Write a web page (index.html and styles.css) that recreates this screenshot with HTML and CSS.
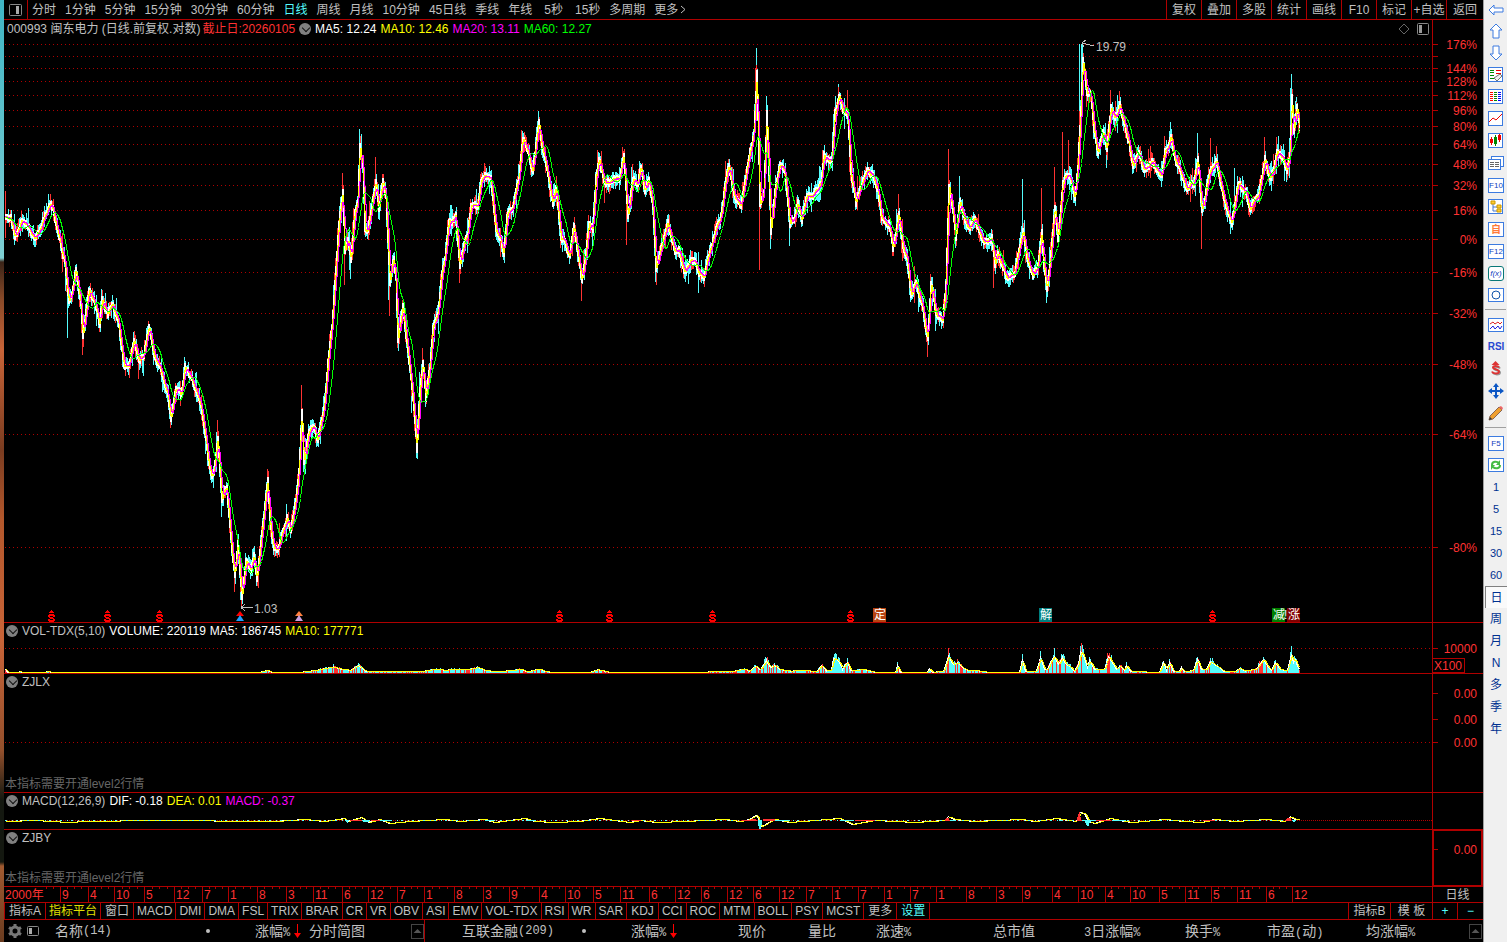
FILE: index.html
```html
<!DOCTYPE html>
<html lang="zh-CN">

    <head>
        <meta charset="UTF-8">
        <meta name="viewport" content="width=device-width, initial-scale=1.0">
        <title>闽东电力 000993</title>
        <link rel="stylesheet" href="styles.css">
    </head>

    <body>
        <div class="wallpaper"></div>

        <main class="app">
            <nav class="topbar">
                <button class="topbar__layout" aria-label="布局">
                    <svg width="13" height="12" viewBox="0 0 13 12"><rect x=".5" y=".5" width="12" height="11" rx="1" fill="none" stroke="#888"/><rect x="7" y="2" width="3" height="8" fill="#aaa"/></svg>
                </button>
                <div class="periods">
                    <button>分时</button>
                    <button>1分钟</button>
                    <button>5分钟</button>
                    <button>15分钟</button>
                    <button>30分钟</button>
                    <button>60分钟</button>
                    <button class="active">日线</button>
                    <button>周线</button>
                    <button>月线</button>
                    <button>10分钟</button>
                    <button>45日线</button>
                    <button>季线</button>
                    <button>年线</button>
                    <button class="wide">5秒</button>
                    <button>15秒</button>
                    <button>多周期</button>
                    <button>更多<svg width="8" height="9" viewBox="0 0 8 9"><path d="M3 1l4 3.500-4 3.500" fill="none" stroke="#c0c0c0"/></svg></button>
                </div>
                <div class="tools">
                    <button>复权</button>
                    <button>叠加</button>
                    <button>多股</button>
                    <button>统计</button>
                    <button>画线</button>
                    <button>F10</button>
                    <button>标记</button>
                    <button>+自选</button>
                    <button>返回</button>
                </div>
            </nav>

            <section class="panel panel--main">
                <svg class="plot" id="kline"></svg>
                <header class="legend">
                    <span>000993 闽东电力 (日线.前复权.对数)</span>
                    <span class="red">截止日:20260105</span>
                    <button class="fold" aria-label="指标菜单"></button>
                    <span class="white">MA5: 12.24</span>
                    <span class="yellow">MA10: 12.46</span>
                    <span class="magenta">MA20: 13.11</span>
                    <span class="green">MA60: 12.27</span>
                    <span class="legend__icons">
                        <svg width="12" height="12" viewBox="0 0 12 12"><path d="M6 1l5 5-5 5-5-5z" fill="none" stroke="#666"/></svg>
                        <svg width="12" height="12" viewBox="0 0 12 12"><rect x=".5" y=".5" width="11" height="11" rx="1" fill="none" stroke="#888"/><rect x="2" y="2" width="3" height="8" fill="#999"/></svg>
                    </span>
                </header>
            </section>

            <section class="panel panel--vol">
                <svg class="plot" id="vol"></svg>
                <header class="legend">
                    <button class="fold" aria-label="指标菜单"></button>
                    <span>VOL-TDX(5,10)</span>
                    <span class="white">VOLUME: 220119</span>
                    <span class="white">MA5: 186745</span>
                    <span class="yellow">MA10: 177771</span>
                </header>
            </section>

            <section class="panel panel--zjlx">
                <svg class="plot" id="zjlx"></svg>
                <header class="legend">
                    <button class="fold" aria-label="指标菜单"></button>
                    <span>ZJLX</span>
                </header>
                <p class="notice">本指标需要开通level2行情</p>
            </section>

            <section class="panel panel--macd">
                <svg class="plot" id="macd"></svg>
                <header class="legend">
                    <button class="fold" aria-label="指标菜单"></button>
                    <span>MACD(12,26,9)</span>
                    <span class="white">DIF: -0.18</span>
                    <span class="yellow">DEA: 0.01</span>
                    <span class="magenta">MACD: -0.37</span>
                </header>
            </section>

            <section class="panel panel--zjby">
                <svg class="plot" id="zjby"></svg>
                <header class="legend">
                    <button class="fold" aria-label="指标菜单"></button>
                    <span>ZJBY</span>
                </header>
                <p class="notice">本指标需要开通level2行情</p>
            </section>

            <section class="panel panel--time">
                <svg class="plot" id="time"></svg>
                <span class="time__period">日线</span>
            </section>

            <nav class="tabs">
                <button class="cjk">指标A</button>
                <button class="gold">指标平台</button>
                <button class="cjk">窗口</button>
                <button>MACD</button>
                <button>DMI</button>
                <button>DMA</button>
                <button>FSL</button>
                <button>TRIX</button>
                <button>BRAR</button>
                <button>CR</button>
                <button>VR</button>
                <button>OBV</button>
                <button>ASI</button>
                <button>EMV</button>
                <button>VOL-TDX</button>
                <button>RSI</button>
                <button>WR</button>
                <button>SAR</button>
                <button class="cjk">KDJ</button>
                <button>CCI</button>
                <button>ROC</button>
                <button>MTM</button>
                <button>BOLL</button>
                <button>PSY</button>
                <button>MCST</button>
                <button class="cjk">更多</button>
                <button class="cjk cyan">设置</button>
                <div class="tabs__right">
                    <button>指标B</button>
                    <button>模 板</button>
                    <button class="zoom">+</button>
                    <button class="zoom">−</button>
                </div>
            </nav>

            <footer class="lists">
                <div class="list list--left">
                    <span class="list__icons">
                        <svg width="16" height="16" viewBox="0 0 16 16"><circle cx="8" cy="8" r="4" fill="none" stroke="#777" stroke-width="3"/><path d="M8 1v3M8 12v3M2 4.500l2.500 1.500M11.500 10l2.500 1.500M2 11.500L4.500 10M11.500 6L14 4.500" stroke="#777" stroke-width="3"/></svg>
                        <svg width="12" height="12" viewBox="0 0 12 12"><rect x=".5" y="1.500" width="11" height="9" rx="1" fill="none" stroke="#888"/><rect x="2" y="3" width="3" height="6" fill="#aaa"/></svg>
                    </span>
                    <span class="name">名称<i>(14)</i><b class="dot"></b></span>
                    <span>涨幅<i>%</i><svg class="down" width="7" height="14" viewBox="0 0 7 14"><path d="M3 0h1v9h3l-3.500 5L0 9h3z" fill="#f00"/></svg></span>
                    <span>分时简图</span>
                    <button class="scroll" aria-label="向上"><svg width="11" height="13" viewBox="0 0 11 13"><path d="M5.500 4l4 4h-8z" fill="#555"/></svg></button>
                </div>
                <div class="list list--right">
                    <span class="name">互联金融<i>(209)</i><b class="dot"></b></span>
                    <span>涨幅<i>%</i><svg class="down" width="7" height="14" viewBox="0 0 7 14"><path d="M3 0h1v9h3l-3.500 5L0 9h3z" fill="#f00"/></svg></span>
                    <span>现价</span>
                    <span>量比</span>
                    <span>涨速<i>%</i></span>
                    <span>总市值</span>
                    <span><i>3</i>日涨幅<i>%</i></span>
                    <span>换手<i>%</i></span>
                    <span>市盈<i>(</i>动<i>)</i></span>
                    <span>均涨幅<i>%</i></span>
                    <button class="scroll" aria-label="向上"><svg width="11" height="13" viewBox="0 0 11 13"><path d="M5.500 4l4 4h-8z" fill="#555"/></svg></button>
                </div>
            </footer>
        </main>

        <aside class="sidebar">
            <button class="first" aria-label="后退"><svg viewBox="0 0 16 16"><path d="M1 8l5-5v3h9v4H6v3z" fill="#fff" stroke="#3c7be0"/></svg></button>
            <button aria-label="上移"><svg viewBox="0 0 16 16"><path d="M8 1l6 6h-3v8H5V7H2z" fill="#fff" stroke="#3c7be0"/></svg></button>
            <button aria-label="下移"><svg viewBox="0 0 16 16"><path d="M8 15l6-6h-3V1H5v8H2z" fill="#fff" stroke="#3c7be0"/></svg></button>
            <button aria-label="报价"><svg viewBox="0 0 16 16"><rect class="box" x=".5" y=".5" width="14" height="14"/><path d="M2 3.500h4M2 5.500h4M2 8.500h4M2 11.500h4" stroke="#080"/><path d="M8 3.500h5M8 6.500h5" stroke="#e00"/><path d="M6 11l3 3 5-5-2-2z" fill="#eee" stroke="#777"/></svg></button>
            <button aria-label="列表"><svg viewBox="0 0 16 16"><rect class="box" x=".5" y=".5" width="14" height="14"/><path d="M2 3.500h3M2 5.500h3M2 7.500h3M2 9.500h3M2 11.500h3" stroke="#f00"/><path d="M6 3.500h3M6 5.500h3M6 7.500h3M6 9.500h3M6 11.500h3" stroke="#080"/><path d="M10 3.500h3M10 5.500h3M10 7.500h3M10 9.500h3M10 11.500h3" stroke="#00f"/></svg></button>
            <button aria-label="走势"><svg viewBox="0 0 16 16"><rect class="box" x=".5" y=".5" width="14" height="14"/><path d="M1 11l4-4 3 2 6-6" fill="none" stroke="#e00"/></svg></button>
            <button aria-label="K线"><svg viewBox="0 0 16 16"><rect class="box" x=".5" y=".5" width="14" height="14"/><path d="M3.500 4v8M11.500 1v8" stroke="#e00"/><path d="M7.500 2v11" stroke="#080"/><path d="M2 6h3v4H2zM10 2h3v5h-3z" fill="#e00"/><path d="M6 4h3v7H6z" fill="#080"/></svg></button>
            <button aria-label="窗口"><svg viewBox="0 0 16 16"><rect class="box" x="3.500" y="1.500" width="12" height="10"/><rect class="box" x=".5" y="4.500" width="12" height="10"/><path d="M2 7.500h4M7 7.500h4M2 9.500h4M7 9.500h4M2 11.500h4M7 11.500h4" stroke="#666"/></svg></button>
            <button class="key"><span>F10</span></button>
            <button aria-label="结构"><svg viewBox="0 0 16 16"><rect class="box" x=".5" y=".5" width="14" height="14"/><path d="M5 5v7h4M5 8h4" fill="none" stroke="#47c"/><path d="M3 2h4v3H3zM9 6h4v3H9zM9 10h4v3H9z" fill="#fc3" stroke="#c90"/></svg></button>
            <button class="key key--orange"><span>自</span></button>
            <button class="key"><span>F12</span></button>
            <button class="key key--fx"><span>f(x)</span></button>
            <button aria-label="圆"><svg viewBox="0 0 16 16"><rect class="box" x=".5" y="1.500" width="15" height="13"/><circle cx="8" cy="8" r="4" fill="none" stroke="#15a"/></svg></button>
            <hr>
            <button aria-label="叠加"><svg viewBox="0 0 16 16"><rect class="box" x=".5" y="1.500" width="15" height="13"/><path d="M2 7l3-2 2 2 3-2 2 2 2-2" fill="none" stroke="#d22"/><path d="M2 12l3-3 2 3 3-3 2 3 2-3" fill="none" stroke="#22d"/></svg></button>
            <button class="rsi">RSI</button>
            <button aria-label="信号"><svg viewBox="0 0 16 16"><path d="M7.500 0l4 4h-8z" fill="#d33"/><path d="M12 7.500c-1-2-6-2-6 0s6 1.500 6 4-6 2.500-7 0" fill="none" stroke="#999" stroke-width="2"/><path d="M11 6.500c-1-2-6-2-6 0s6 1.500 6 4-6 2.500-7 0" fill="none" stroke="#d33" stroke-width="2"/></svg></button>
            <button aria-label="移动"><svg viewBox="0 0 16 16"><path d="M8 0l3 4H9v3h3V5l4 3-4 3V9H9v3h2l-3 4-3-4h2V9H4v2L0 8l4-3v2h3V4H5z" fill="#0b56c4"/></svg></button>
            <button aria-label="画笔"><svg viewBox="0 0 16 16"><path d="M1 15l1-4 9-9 3 3-9 9z" fill="#f0a030" stroke="#865"/><path d="M11 2l2-1 2 2-1 2z" fill="#e66"/><path d="M1 15l1-3 2 2z" fill="#333"/></svg></button>
            <hr>
            <button class="key"><span>F5</span></button>
            <button aria-label="刷新"><svg viewBox="0 0 16 16"><rect class="box" x=".5" y="1.500" width="15" height="13"/><path d="M4 8c0-4 5-4 7-2M12 8c0 4-5 4-7 2" fill="none" stroke="#4b4" stroke-width="2"/><path d="M12 3v5H8zM3 13V8h4z" fill="#4b4"/></svg></button>
            <button class="num">1</button>
            <button class="num">5</button>
            <button class="num">15</button>
            <button class="num">30</button>
            <button class="num">60</button>
            <button class="num on">日</button>
            <button class="num">周</button>
            <button class="num">月</button>
            <button class="num">N</button>
            <button class="num">多</button>
            <button class="num">季</button>
            <button class="num">年</button>
        </aside>

        <script src="chart.js"></script>
    </body>

</html>
```
FILE: styles.css
```css
* {
    margin: 0;
    padding: 0;
    box-sizing: border-box;
}

body {
    display: flex;
    height: 100vh;
    background: #000;
    color: #c0c0c0;
    font: 12px/16px "Liberation Sans", "Noto Sans CJK SC", sans-serif;
    overflow: hidden;
}

button {
    border: 0;
    background: none;
    color: inherit;
    font: inherit;
    white-space: nowrap;
    cursor: pointer;
}

.white { color: #fff; }
.yellow { color: #ff0; }
.magenta { color: #f0f; }
.green { color: #0f0; }
.red { color: #ff3232; }

.wallpaper {
    width: 4px;
    background: linear-gradient(#3fb5c4 0, #7fd0d4 258px, #3a2418 262px, #8a4a28 300px, #c86438 350px, #7a3c20 450px, #b4582c 520px, #c86438 640px, #94502c 750px, #141810 800px, #141810 862px, #a05a30 866px, #6a3c20 100%);
}

.app {
    flex: 1;
    min-width: 0;
    display: flex;
    flex-direction: column;
}

/* top bar */
.topbar {
    display: flex;
    height: 20px;
    border-bottom: 1px solid #b00000;
}

.topbar__layout {
    width: 24px;
    border-right: 1px solid #b00000;
    line-height: 0;
}

.periods {
    display: flex;
    gap: 9px;
    padding-left: 4px;
    flex: 1;
    line-height: 18px;
}

.periods .active {
    color: #54fcfc;
}

.periods .wide {
    padding: 0 3px;
}

.tools {
    display: flex;
}

.tools button {
    width: 35px;
    border-left: 1px solid #b00000;
    line-height: 18px;
}

.tools button:last-child {
    width: 37px;
}

/* chart panels */
.panel {
    position: relative;
    border-bottom: 1px solid #b00000;
}

.panel--main { flex: 1; min-height: 0; }
.panel--vol { height: 51px; }
.panel--zjlx { height: 119px; }
.panel--macd { height: 37px; }
.panel--zjby { height: 57px; }
.panel--time { height: 16px; }

.plot {
    position: absolute;
    left: 0;
    top: 0;
    width: 100%;
    height: 100%;
}

.plot text {
    font: 12px "Liberation Sans", "Noto Sans CJK SC", sans-serif;
}

.legend {
    position: relative;
    display: flex;
    align-items: center;
    gap: 4px;
    padding-left: 2px;
    height: 15px;
}

.panel--main .legend {
    height: 18px;
    padding-left: 3px;
}

.panel--main .legend .red {
    margin-left: -2px;
}

.legend__icons {
    display: flex;
    gap: 7px;
    margin-left: auto;
    padding-right: 54px;
}

.fold {
    position: relative;
    width: 12px;
    height: 12px;
    border-radius: 6px;
    background: #808080;
}

.fold::after {
    content: "";
    position: absolute;
    left: 4px;
    top: 2px;
    width: 5px;
    height: 5px;
    border: solid #111;
    border-width: 0 1px 1px 0;
    transform: rotate(45deg);
}

.notice {
    position: absolute;
    left: 1px;
    bottom: 0;
    color: #666;
}

.time__period {
    position: absolute;
    right: 0;
    width: 51px;
    text-align: center;
}

/* indicator tabs */
.tabs {
    display: flex;
    height: 17px;
    border-bottom: 1px solid #b00000;
    border-left: 1px solid #b00000;
}

.tabs button {
    padding: 0 3px;
    border-right: 1px solid #b00000;
    line-height: 16px;
}

.tabs .cjk { padding: 0 4px; }
.tabs .gold { color: #e0e000; }
.tabs .cyan { color: #54fcfc; }

.tabs__right {
    display: flex;
    margin-left: auto;
    border-left: 1px solid #b00000;
}

.tabs__right button {
    width: 42px;
}

.tabs__right .zoom {
    width: 25px;
    color: #54fcfc;
}

.tabs__right .zoom:last-child {
    border-right: 0;
}

/* quote list headings */
.lists {
    display: flex;
    height: 22px;
    font-size: 14px;
    line-height: 20px;
    white-space: nowrap;
}

.lists i {
    font: 12px "Liberation Mono", monospace;
}

.list {
    display: grid;
    align-items: center;
}

.list--left {
    width: 421px;
    grid-template-columns: 51px 1fr 54px 102px 13px;
    border-right: 1px solid #b00000;
}

.list--right {
    flex: 1;
    padding-left: 37px;
    grid-template-columns: 169fr 107fr 70fr 68fr 117fr 91fr 101fr 82fr 99fr 103fr 14px;
}

.list__icons {
    display: flex;
    align-items: center;
    gap: 4px;
    padding-left: 3px;
}

.name {
    display: flex;
    align-items: center;
}

.dot {
    width: 4px;
    height: 4px;
    margin: 0 45px 0 auto;
    border-radius: 2px;
    background: #c0c0c0;
}

.down {
    margin-left: 4px;
    vertical-align: -2px;
}

.scroll {
    width: 13px;
    height: 15px;
    border: 1px solid #444;
    line-height: 0;
}

/* right icon bar */
.sidebar {
    width: 24px;
    padding-left: 1px;
    background: #f0f0f0;
    border-left: 1px solid #a0a0a0;
    display: flex;
    flex-direction: column;
    color: #003090;
}

.sidebar button {
    flex: none;
    height: 22px;
    display: flex;
    align-items: center;
    justify-content: center;
}

.sidebar .first {
    height: 20px;
}

.sidebar svg {
    width: 16px;
    height: 16px;
}

.sidebar .box {
    fill: #fff;
    stroke: #3c7be0;
}

.sidebar hr {
    margin: 3px 1px 4px 0;
    border: 0;
    height: 1px;
    background: #a0a0a0;
}

.key span {
    width: 16px;
    height: 15px;
    border: 1px solid #3c7be0;
    background: #fff;
    color: #1040c0;
    font-size: 8px;
    line-height: 13px;
}

.key--orange span {
    color: #ff7a38;
    font-size: 10px;
    font-weight: bold;
}

.key--fx span {
    border-color: #087878;
    border-radius: 3px;
    font-style: italic;
}

.sidebar .rsi {
    font-weight: bold;
    font-size: 10px;
    color: #2848d0;
}

.sidebar .num {
    font-size: 11px;
}

.sidebar .num:nth-last-child(-n+7) {
    font-size: 12px;
}

.sidebar .on {
    background: #fafafa;
    border-left: 1px solid #808080;
    border-top: 1px solid #808080;
}
```
FILE: chart.js
```js
const NS = "http://www.w3.org/2000/svg";
const RED = "#b00000";
const UP = "#ff3232";
const DOWN = "#54fcfc";
const BASE_W = 1479;
const AXIS_W = 51;

// x, price level
const price = [
    [1, 198], [6, 197], [10, 217], [16, 202], [24, 205], [30, 221], [38, 200], [46, 183], [49, 192], [54, 220], [60, 240], [64, 281], [67, 277], [71, 252], [76, 283], [78, 315], [80, 300], [84, 270], [89, 280], [95, 306], [97, 280], [103, 293], [107, 283], [113, 300], [119, 345], [124, 350], [129, 327], [135, 340], [139, 333], [144, 307], [149, 333], [156, 350], [163, 373], [166, 397], [171, 367], [176, 377], [180, 347], [188, 360], [196, 383], [199, 407], [203, 437], [207, 457], [209, 450], [213, 417], [215, 447], [217, 477], [222, 468], [226, 517], [230, 557], [233, 527], [237, 576], [241, 543], [246, 550], [249, 533], [252, 560], [256, 527], [259, 497], [263, 462], [265, 500], [269, 527], [273, 532], [278, 513], [282, 497], [286, 507], [291, 480], [294, 453], [297, 390], [299, 443], [304, 413], [309, 407], [313, 418], [316, 400], [319, 387], [323, 343], [327, 307], [330, 263], [334, 203], [338, 170],
    [340, 230], [343, 217], [346, 237], [350, 193], [353, 185], [355, 127], [358, 150], [360, 210], [363, 213], [366, 197], [371, 160], [374, 187], [378, 163], [381, 180], [385, 260], [389, 237], [391, 257], [393, 317], [398, 290], [403, 330], [407, 367], [409, 390], [412, 430], [415, 370], [418, 340], [421, 377], [425, 350], [428, 310], [433, 293], [436, 260], [441, 230], [444, 200], [451, 197], [455, 250], [459, 227], [463, 217], [466, 187], [473, 183], [476, 160], [480, 157], [486, 162], [491, 213], [496, 217], [499, 233], [502, 197], [508, 187], [514, 160], [518, 120], [523, 133], [528, 153], [531, 127], [534, 103], [538, 130], [542, 147], [548, 187], [551, 170], [556, 217], [560, 220], [565, 237], [569, 207], [574, 240], [577, 263], [581, 233], [584, 203], [588, 210], [591, 160], [594, 140], [599, 160], [606, 163], [614, 160], [619, 137], [623, 200], [628, 160], [633, 163], [636, 147], [640, 170], [644, 157], [648, 183], [651, 247], [658, 223], [663, 207], [666, 217], [670, 233], [674, 228], [679, 250], [686, 240], [691, 240], [694, 257], [699, 257], [706, 230], [711, 213], [716, 197], [720, 167], [724, 150], [729, 177], [736, 183],
    [741, 157], [745, 130], [749, 117], [752, 53], [755, 187], [759, 177], [762, 97], [766, 210], [771, 163], [775, 143], [780, 147], [785, 207], [790, 197], [793, 183], [797, 200], [801, 180], [808, 173], [816, 163], [819, 133], [827, 143], [830, 93], [834, 77], [840, 93], [843, 93], [846, 153], [851, 183], [856, 167], [861, 153], [867, 153], [873, 170], [877, 200], [884, 203], [888, 227], [894, 193], [898, 227], [902, 233], [906, 273], [912, 263], [917, 283], [923, 320], [926, 267], [932, 297], [938, 303], [941, 267], [944, 167], [948, 187], [951, 217], [955, 180], [960, 200], [965, 210], [970, 200], [978, 223], [987, 217], [990, 243], [993, 230], [1002, 257], [1010, 253], [1013, 237], [1018, 213], [1023, 237], [1028, 257], [1033, 247], [1037, 210], [1039, 247], [1042, 270], [1047, 223], [1050, 187], [1053, 217], [1058, 160], [1064, 153], [1070, 177], [1073, 147], [1076, 87], [1078, 40], [1082, 70], [1086, 70], [1089, 107], [1093, 133], [1098, 117], [1102, 130], [1106, 90], [1110, 97], [1115, 87], [1121, 110], [1124, 120], [1128, 147], [1134, 137], [1139, 150], [1147, 143], [1157, 160], [1160, 133], [1166, 117], [1171, 143], [1176, 153], [1181, 167], [1189, 167], [1193, 143], [1197, 193], [1202, 167], [1206, 153], [1212, 143], [1217, 167], [1221, 187], [1227, 200], [1233, 163], [1241, 170], [1245, 188], [1253, 180], [1260, 140], [1266, 160], [1272, 135], [1277, 138], [1282, 150], [1285, 130], [1287, 75], [1289, 110], [1292, 88], [1295, 110]
];

// x, far end of the wick, colour
const wicks = [
    [1, 171, UP], [1, 218, UP], [44, 174, DOWN], [78, 335, UP], [63, 318, DOWN], [144, 301, UP], [213, 400, UP], [237, 588, UP], [236, 580, DOWN], [230, 572, UP], [263, 449, UP], [297, 365, UP], [338, 153, UP], [340, 265, UP], [355, 109, DOWN], [356, 116, UP], [385, 296, UP], [384, 280, DOWN], [371, 137, UP], [412, 437, DOWN], [407, 393, DOWN], [418, 328, UP], [480, 143, UP], [496, 237, UP], [518, 111, DOWN], [534, 91, DOWN], [577, 281, UP], [593, 130, UP], [622, 225, UP], [618, 127, UP], [600, 183, UP], [651, 262, DOWN], [665, 195, UP],
    [752, 28, DOWN], [751, 48, UP], [755, 250, UP], [762, 76, DOWN], [766, 229, DOWN], [785, 226, DOWN], [834, 64, DOWN], [843, 70, UP], [923, 337, UP], [944, 129, UP], [955, 156, DOWN], [894, 174, UP], [989, 268, UP], [1018, 159, DOWN], [1037, 168, UP], [1042, 283, DOWN], [1050, 147, UP], [1058, 112, UP], [1064, 120, UP], [1075, 24, DOWN], [1077, 24, DOWN], [1078, 24, DOWN], [1102, 148, DOWN], [1106, 70, UP], [1115, 71, UP], [1160, 116, UP], [1166, 102, DOWN], [1193, 113, DOWN], [1197, 229, UP], [1197, 217, DOWN], [1206, 118, UP], [1212, 126, UP], [1230, 148, DOWN], [1260, 117, UP], [1272, 117, UP], [1287, 54, DOWN], [1286, 68, DOWN], [1291, 81, DOWN], [1292, 82, UP]
];

// x, bar height
const volume = [
    [1, 6], [3, 1], [14, 1], [15, 3], [17, 1], [36, 1], [44, 2], [48, 1], [140, 1], [255, 1], [263, 4], [267, 1], [294, 1], [312, 4], [322, 7], [329, 9], [336, 6], [346, 4], [354, 11], [361, 3], [372, 3], [381, 2], [398, 2], [416, 2], [433, 6], [441, 4], [448, 6], [462, 5], [474, 8], [481, 4], [491, 2], [509, 4], [516, 6], [523, 2], [535, 6], [541, 2], [555, 1], [585, 1], [593, 5], [606, 1], [696, 1], [706, 2], [730, 3], [741, 6], [745, 3], [751, 10], [756, 5], [762, 18], [766, 8], [770, 11], [776, 5], [786, 3], [801, 4], [812, 2], [817, 11], [822, 3], [827, 4], [829, 21], [834, 18], [838, 6], [843, 16], [846, 4], [860, 5], [872, 1], [891, 1], [893, 11], [896, 1], [923, 1], [925, 7], [928, 1], [939, 3], [944, 24], [949, 12], [953, 15], [959, 7], [963, 4], [976, 3], [984, 1], [1015, 1], [1018, 20], [1021, 2], [1032, 3], [1036, 22], [1040, 6], [1043, 5], [1047, 18], [1050, 24], [1054, 12], [1058, 22], [1062, 12], [1066, 9], [1070, 3], [1074, 12], [1076, 31], [1079, 26], [1083, 8], [1085, 18], [1090, 6], [1100, 5], [1104, 24], [1108, 15], [1112, 6], [1116, 10], [1120, 4], [1122, 11], [1126, 3], [1136, 2], [1155, 1], [1159, 16], [1162, 4], [1165, 15], [1169, 3], [1175, 2], [1177, 8], [1180, 2], [1189, 4], [1193, 20], [1197, 5], [1202, 5], [1206, 17], [1210, 12], [1214, 9], [1219, 3], [1230, 2], [1235, 7], [1241, 3], [1252, 6], [1259, 20], [1264, 8], [1267, 4], [1271, 16], [1276, 5], [1283, 4], [1287, 27], [1289, 16], [1291, 20], [1293, 10], [1295, 5]
];

// x, DIF above the zero line
const dif = [
    [1, -1], [30, 0], [64, -2], [80, -1], [150, 0], [270, -1], [300, 1], [320, -1], [340, 2], [343, -1], [357, 3], [364, -2], [375, 1], [385, -3], [405, -1], [440, 1], [455, -1], [480, 1], [490, -2], [520, 2], [530, -1], [550, -2], [574, -1], [595, 2], [610, 0], [625, -2], [636, 0], [652, -2], [680, -1], [720, 1], [735, -1], [745, 1], [751, 5], [753, 5], [756, -7], [764, -2], [770, 1], [785, -2], [810, 0], [835, 2], [848, -4], [870, 0], [892, -1], [910, -2], [940, 0], [944, 4], [950, 1], [970, -1], [1017, 1], [1030, -1], [1052, 2], [1057, 1], [1072, -1], [1075, 8], [1080, 7], [1084, -1], [1090, -3], [1106, 2], [1120, -1], [1128, -2], [1160, 1], [1180, -1], [1197, -2], [1210, 1], [1230, -1], [1262, 1], [1280, -1], [1286, 4], [1290, 1], [1295, 1]
];

const months = [
    [56, 9], [84, 4], [110, 10], [140, 5], [170, 12], [198, 7], [224, 1], [253, 8], [282, 3], [309, 11], [338, 6], [364, 12], [393, 7], [420, 1], [450, 8], [479, 3], [505, 9], [535, 4], [561, 10], [589, 5], [616, 11], [645, 6], [671, 12], [697, 6], [723, 12], [749, 6], [775, 12], [802, 7], [828, 1], [854, 7], [880, 1], [906, 7], [932, 1], [962, 8], [992, 3], [1018, 9], [1048, 4], [1074, 10], [1101, 4], [1126, 10], [1155, 5], [1181, 11], [1207, 5], [1233, 11], [1262, 6], [1288, 12]
];

const levels = [[24, "176%"], [36, ""], [48, "144%"], [61, "128%"], [75, "112%"], [90, "96%"], [106, "80%"], [124, "64%"], [144, "48%"], [165, "32%"], [190, "16%"], [219, "0%"], [252, "-16%"], [293, "-32%"], [344, "-48%"], [414, "-64%"], [527, "-80%"]];

let seed;
function random() {
    seed = (seed * 1103515245 + 12345) % 2147483648;
    return seed / 2147483648;
}

function valueAt(points, x) {
    let i = 1;
    while (i < points.length - 1 && points[i][0] < x) i++;
    const [x0, y0] = points[i - 1];
    const [x1, y1] = points[i];
    const t = Math.min(1, Math.max(0, (x - x0) / (x1 - x0)));
    return y0 + (y1 - y0) * t;
}

function average(values, count) {
    return values.map((v, i) => {
        const part = values.slice(Math.max(0, i - count + 1), i + 1);
        return part.reduce((a, b) => a + b, 0) / part.length;
    });
}

function add(svg, name, attrs, text) {
    const el = document.createElementNS(NS, name);
    for (const key in attrs) el.setAttribute(key, attrs[key]);
    if (text !== undefined) el.textContent = text;
    svg.appendChild(el);
    return el;
}

function path(svg, d, stroke, width = 1, extra = {}) {
    return add(svg, "path", { d, stroke, "stroke-width": width, fill: "none", "shape-rendering": "crispEdges", ...extra });
}

function setup(id, baseHeight) {
    const svg = document.getElementById(id);
    svg.innerHTML = "";
    const w = svg.clientWidth;
    const h = svg.clientHeight;
    const sx = (w - AXIS_W) / (BASE_W - AXIS_W);
    return { svg, w, h, axis: w - AXIS_W, X: x => Math.round(x * sx), Y: y => y * h / baseHeight };
}

function axisLine({ svg, axis, h }) {
    path(svg, `M${axis + .5} 0V${h}`, RED);
}

function level(c, y, label, dotted = true) {
    const yy = Math.round(c.Y(y)) + .5;
    if (dotted) path(c.svg, `M1 ${yy}H${c.axis}`, RED, 1, { "stroke-dasharray": "1 3" });
    path(c.svg, `M${c.axis} ${yy}h6`, RED);
    if (label) add(c.svg, "text", { x: c.w - 6, y: yy + 4, fill: UP, "text-anchor": "end" }, label);
}

function line(c, values, colour) {
    let d = "";
    values.forEach((v, i) => d += `${i ? "L" : "M"}${c.X(1 + i) + .5} ${Math.round(c.Y(v)) + .5}`);
    path(c.svg, d, colour);
}

// vertical run in every column, from one average to the next
function steps(c, values, colour, reach) {
    let d = "";
    values.forEach((v, i) => {
        const prev = values[Math.max(0, i - 1)];
        const top = Math.round(c.Y(Math.min(v, prev) - reach));
        const bottom = Math.round(c.Y(Math.max(v, prev) + reach));
        d += `M${c.X(1 + i) + .5} ${top}V${Math.max(bottom, top + 1)}`;
    });
    path(c.svg, d, colour);
}

function signal(svg, x, y) {
    add(svg, "path", {
        d: `M${x} ${y - 1}h1v1h1v1h1v1h-5v-1h1v-1h1zM${x - 2} ${y + 3}h5v1h1v2h-2v-1h-3v1h3v1h1v1h1v2h-1v1h-5v-1h-1v-2h2v1h3v-1h-3v-1h-1v-1h-1v-2h1z`,
        fill: "#f00",
        "shape-rendering": "crispEdges"
    });
}

function badge(svg, x, y, fill, text) {
    add(svg, "rect", { x, y, width: 13, height: 14, fill });
    add(svg, "text", { x: x + 1, y: y + 11, fill: "#fff" }, text);
}

function drawKline() {
    const c = setup("kline", 602);
    const { svg, X, Y } = c;
    seed = 993;
    levels.forEach(l => level(c, l[0], l[1]));
    axisLine(c);

    const close = [];
    let drift = 0;
    for (let x = 1; x <= 1295; x++) {
        drift = drift * .7 + (random() - .5) * 5;
        close.push(valueAt(price, x) + drift);
    }

    const bars = { [UP]: "", [DOWN]: "" };
    close.forEach((y, i) => {
        const x = X(i + 1) + .5;
        const prev = close[Math.max(0, i - 1)];
        const tall = random() < .15 ? 9 : 0;
        const top = Math.min(y, prev) - 3 - random() * (7 + tall);
        const bottom = Math.max(y, prev) + 3 + random() * (7 + tall);
        bars[random() < .33 ? UP : DOWN] += `M${x} ${Math.round(Y(top))}V${Math.round(Y(bottom))}`;
    });
    wicks.forEach(([x, y, colour]) => {
        bars[colour] += `M${X(x) + .5} ${Math.round(Y(valueAt(price, x)))}V${Math.round(Y(y))}`;
    });
    path(svg, bars[DOWN], DOWN);
    path(svg, bars[UP], UP);

    steps(c, close, "#fff", 3);
    steps(c, average(close, 2), "#ff0", 1);
    steps(c, average(close, 4), "#f0f", .5);
    line(c, average(close, 13), "#0f0");

    // highest and lowest price
    const hx = X(1078);
    path(svg, `M${hx} ${Y(23)}l12 3m-12-3l4-3m-4 3l2 4`, "#c0c0c0");
    add(svg, "text", { x: hx + 14, y: Y(31), fill: "#c0c0c0" }, "19.79");
    const lx = X(237);
    path(svg, `M${lx} ${Y(587) + .5}h12m-12 0l4-3m-4 3l4 3`, "#c0c0c0");
    add(svg, "text", { x: lx + 13, y: Y(593), fill: "#c0c0c0" }, "1.03");

    const base = c.h - 11;
    [47, 103, 155, 555, 605, 708, 846, 1208].forEach(x => signal(svg, X(x), base));
    [236, 295].forEach((x, i) => {
        add(svg, "path", { d: `M${X(x)} ${base}l4 5h-8z`, fill: i ? "#ff8040" : "#f00" });
        add(svg, "path", { d: `M${X(x)} ${base + 4}l4 6h-8z`, fill: i ? "#c8a0e0" : "#20a0ff" });
    });
    badge(svg, X(869), c.h - 14, "#b84310", "定");
    badge(svg, X(1035), c.h - 14, "#008080", "解");
    badge(svg, X(1268), c.h - 14, "#008000", "减");
    badge(svg, X(1283), c.h - 14, "#800000", "涨");
    add(svg, "text", { x: X(1280), y: c.h - 3, fill: "#fff" }, "!");
}

function drawVolume() {
    const c = setup("vol", 50);
    const { svg, X } = c;
    seed = 51;
    level(c, 25, "10000");
    axisLine(c);
    const bars = { [UP]: "", [DOWN]: "" };
    const values = [];
    for (let x = 1; x <= 1295; x++) {
        const v = valueAt(volume, x);
        values.push(v);
        const height = Math.round((v - 1) * (.75 + random() * .35));
        if (height > 0) bars[random() < .3 ? UP : DOWN] += `M${X(x) + .5} ${c.h}v${-height}`;
    }
    path(svg, bars[DOWN], DOWN);
    path(svg, bars[UP], UP);
    const tops = values.map(v => c.h - 1 - (v - 1) * .7);
    line(c, tops, "#fff");
    line(c, average(tops, 3), "#ff0");
    add(svg, "rect", { x: c.axis + .5, y: c.h - 14.5, width: 32, height: 14, fill: "none", stroke: RED });
    add(svg, "text", { x: c.axis + 2, y: c.h - 3, fill: UP }, "X100");
}

function drawMacd() {
    const c = setup("macd", 36);
    const { svg, X } = c;
    const zero = 27.5;
    axisLine(c);
    path(svg, `M1 ${zero}H${c.axis}`, RED, 1, { "stroke-dasharray": "1 1" });
    const values = [];
    for (let x = 1; x <= 1295; x++) values.push(27 - valueAt(dif, x));
    const dea = average(values, 4);
    let up = "", down = "";
    values.forEach((v, i) => {
        const gap = Math.round((dea[i] - v) * 2);
        if (gap > 0) up += `M${X(i + 1) + .5} 28v${-gap}`;
        if (gap < 0) down += `M${X(i + 1) + .5} 27v${-gap}`;
    });
    line(c, values, "#fff");
    line(c, dea, "#ff0");
    path(svg, `M1 ${zero}H${X(1295)}`, DOWN, 1, { "stroke-dasharray": "2 5 1 3" });
    path(svg, up, UP);
    path(svg, down, DOWN);
}

function drawTime() {
    const c = setup("time", 15);
    const { svg, X } = c;
    axisLine(c);
    add(svg, "text", { x: 1, y: 12, fill: UP }, "2000年");
    let d = "M42.5 0v2M49.5 0v2";
    months.forEach(([x, label], i) => {
        const next = i < months.length - 1 ? months[i + 1][0] : x;
        d += `M${X(x) + .5} 0v${c.h}`;
        for (let k = 1; k < 4 && next > x; k++) d += `M${X(x + (next - x) * k / 4) + .5} 0v2`;
        add(svg, "text", { x: X(x) + 2, y: 12, fill: UP }, label);
    });
    path(svg, d, RED);
}

function draw() {
    drawKline();
    drawVolume();
    drawMacd();
    const flow = setup("zjlx", 118);
    axisLine(flow);
    level(flow, 19, "0.00", false);
    level(flow, 45, "0.00", false);
    level(flow, 68, "0.00");
    const game = setup("zjby", 56);
    level(game, 19, "0.00", false);
    add(game.svg, "rect", { x: game.axis + 1, y: 0, width: AXIS_W - 2, height: game.h, fill: "none", stroke: RED, "stroke-width": 2 });
    drawTime();
}

draw();
window.addEventListener("resize", draw);
```
